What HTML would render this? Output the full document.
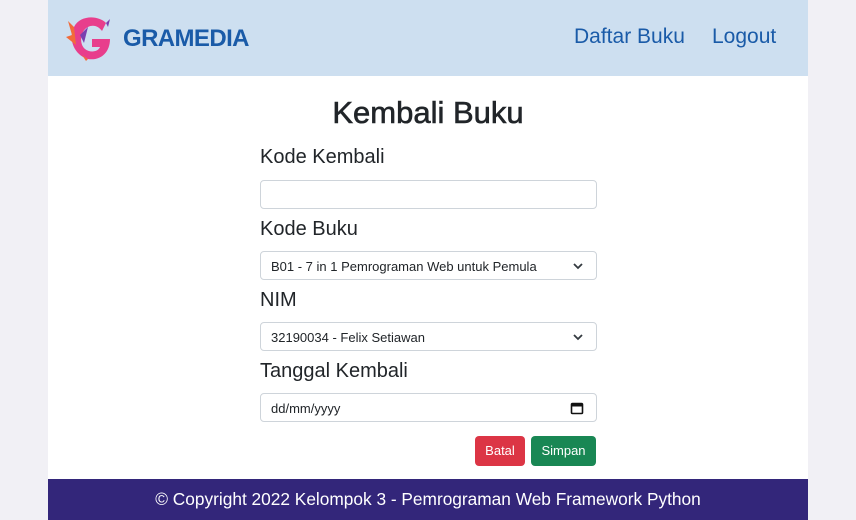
<!DOCTYPE html>
<html><head><style>
body{margin:0;width:856px;height:520px;background:#f1f0f5;font-family:"Liberation Sans",sans-serif;position:relative;overflow:hidden}
.c{position:absolute;left:48px;width:760px;top:0;height:520px;background:#fff}
.hd{position:absolute;left:0;top:0;width:760px;height:76px;background:#cddff0}
.ab{position:absolute;white-space:nowrap}
.lbl{position:absolute;left:212px;font-size:20px;color:#212529}
.in{position:absolute;left:212px;height:29px;border:1px solid #ced4da;border-radius:4px;background:#fff;font-size:13px;color:#212529;line-height:29px;padding-left:10px;box-sizing:border-box;width:337px}
.chev{position:absolute;right:12px;top:9px}
.ft{position:absolute;left:0;top:479px;width:760px;height:41px;background:#33267a;color:#fff;font-size:17.3px;text-align:center;line-height:40px}
.btn{position:absolute;top:436px;height:30px;border-radius:4px;color:#fff;font-size:13px;line-height:30px;text-align:center}
</style></head><body>
<div class="c">
<div class="hd">
<svg class="ab" style="left:18px;top:15px" width="48" height="46" viewBox="0 0 48 46">
<path d="M40 8 C32 0 14 0 8 12 C2 24 8 40 22 44 C34 46 44 38 44 24 L26 24 L26 32 L34 32 C32 37 24 38 19 34 C13 29 14 16 22 12 C28 9 33 12 36 16 Z" fill="#e83e8c"/>
<path d="M8 12 L2 6 L6 20 L0 22 L10 30 Z" fill="#f26b3a"/>
<path d="M22 44 L16 40 L20 46 Z" fill="#f26b3a"/>
<path d="M14 20 L22 12 L18 28 Z" fill="#7b3fb0"/>
<path d="M40 8 L44 4 L42 12 Z" fill="#7b3fb0"/>
</svg>
<div class="ab" style="left:75px;top:25px;font-size:24px;font-weight:bold;letter-spacing:-0.6px;color:#1a5ba8">GRAMEDIA</div>
<div class="ab" style="left:526px;top:25px;font-size:21px;color:#1a5ba8">Daftar Buku</div>
<div class="ab" style="left:664px;top:25px;font-size:21px;color:#1a5ba8">Logout</div>
</div>
<div class="ab" style="left:0;width:760px;text-align:center;top:95px;font-size:31px;color:#212529;-webkit-text-stroke:0.6px #212529">Kembali Buku</div>
<div class="lbl" style="top:146px">Kode Kembali</div>
<div class="in" style="top:180px"></div>
<div class="lbl" style="top:218px">Kode Buku</div>
<div class="in" style="top:251px">B01 - 7 in 1 Pemrograman Web untuk Pemula<svg class="chev" width="12" height="10" viewBox="0 0 12 10"><path d="M2 3 L6 7 L10 3" stroke="#343a40" stroke-width="1.8" fill="none"/></svg></div>
<div class="lbl" style="top:289px">NIM</div>
<div class="in" style="top:322px">32190034 - Felix Setiawan<svg class="chev" width="12" height="10" viewBox="0 0 12 10"><path d="M2 3 L6 7 L10 3" stroke="#343a40" stroke-width="1.8" fill="none"/></svg></div>
<div class="lbl" style="top:360px">Tanggal Kembali</div>
<div class="in" style="top:393px">dd/mm/yyyy<svg class="chev" style="top:7px" width="14" height="14" viewBox="0 0 14 14"><rect x="1.5" y="2.5" width="11" height="10" rx="1" fill="none" stroke="#111" stroke-width="1.6"/><rect x="1.5" y="2.5" width="11" height="3" fill="#111"/></svg></div>
<div class="btn" style="left:427px;width:50px;background:#dc3545">Batal</div>
<div class="btn" style="left:483px;width:65px;background:#198754">Simpan</div>
<div class="ft">© Copyright 2022 Kelompok 3 - Pemrograman Web Framework Python</div>
</div>
</body></html>
